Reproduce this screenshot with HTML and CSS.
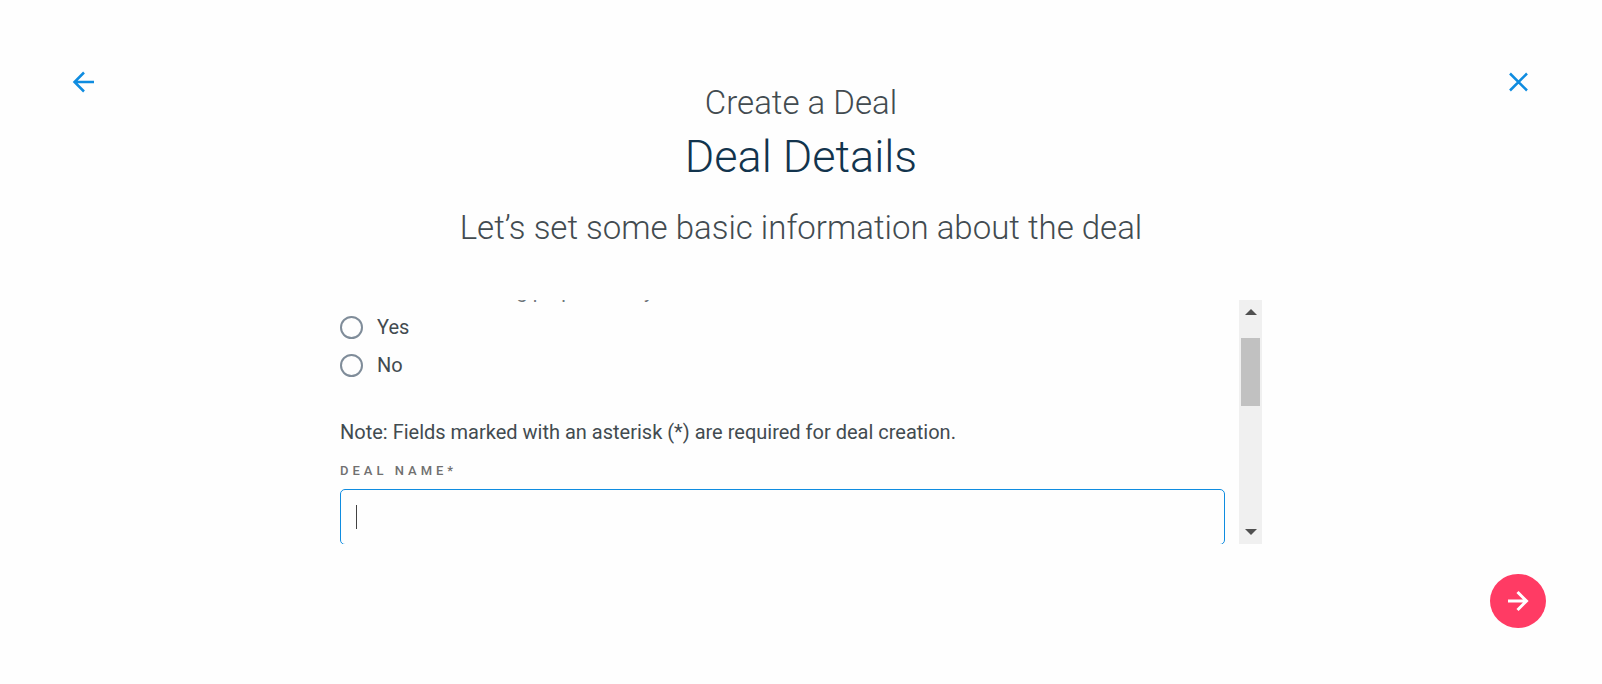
FILE: index.html
```html
<!DOCTYPE html>
<html lang="en">
<head>
<meta charset="utf-8">
<title>Create a Deal</title>
<link rel="stylesheet" href="styles.css">
</head>
<body>
<div class="page">
  <header class="header">
    <button class="icon-button" type="button" aria-label="Back">
      <svg width="24" height="22" viewBox="0 0 24 22"><path d="M23 11H4M13 1.500L3.500 11l9.500 9.500"/></svg>
    </button>
    <div class="titles">
      <p class="flow-name">Create a Deal</p>
      <h1 class="step-name">Deal Details</h1>
      <p class="intro">Let’s set some basic information about the deal</p>
    </div>
    <button class="icon-button" type="button" aria-label="Close">
      <svg width="22" height="22" viewBox="0 0 22 22"><path d="M2 2.500l17 17M19 2.500l-17 17"/></svg>
    </button>
  </header>
  <main class="panel">
    <form class="form">
      <fieldset class="choices">
        <legend class="question">Is the deal now being prepared only?</legend>
        <label class="choice"><input class="radio" type="radio" name="option"><span>Yes</span></label>
        <label class="choice"><input class="radio" type="radio" name="option"><span>No</span></label>
      </fieldset>
      <p class="note">Note: Fields marked with an asterisk (*) are required for deal creation.</p>
      <label class="field-label" for="deal-name">DEAL NAME*</label>
      <div class="field">
        <input class="text-input" id="deal-name" type="text">
        <span class="caret"></span>
      </div>
    </form>
    <div class="scrollbar" aria-hidden="true">
      <svg class="arrow" width="12" height="6" viewBox="0 0 12 6"><path d="M0 6L6 0l6 6z"/></svg>
      <div class="track"><div class="thumb"></div></div>
      <svg class="arrow" width="12" height="6" viewBox="0 0 12 6"><path d="M0 0l6 6 6-6z"/></svg>
    </div>
  </main>
  <footer class="footer">
    <button class="next" type="button" aria-label="Next">
      <svg width="22" height="22" viewBox="0 0 22 22"><path d="M1 11h18M10.500 2l9 9-9 9"/></svg>
    </button>
  </footer>
</div>
</body>
</html>
```
FILE: styles.css
```css
* { box-sizing: border-box; }
body {
  margin: 0;
  background: #fefefe;
  color: #424b50;
  font-family: Roboto, "Liberation Sans", sans-serif;
  font-size: 20px;
}
p, h1 { margin: 0; font-weight: 300; }
button { border: 0; padding: 0; cursor: pointer; }
svg { display: block; fill: none; stroke: currentColor; stroke-width: 3; }
.page { display: flex; flex-direction: column; height: 100vh; padding: 56px; }
.header { display: flex; justify-content: space-between; align-items: flex-start; }
.icon-button {
  display: grid;
  place-items: center;
  width: 54px;
  height: 52px;
  background: none;
  color: #0f8ce0;
}
.icon-button svg { stroke-width: 2.500; }
.titles { padding-top: 25px; text-align: center; }
.flow-name { font-size: 33px; line-height: 44px; }
.step-name { font-size: 45px; line-height: 64px; color: #12344d; }
.intro { margin-top: 17px; font-size: 33px; line-height: 44px; }
.panel {
  display: flex;
  flex: 1;
  gap: 14px;
  width: 100%;
  max-width: 922px;
  min-height: 0;
  margin: 50px auto 30px;
  overflow: hidden;
}
.form { flex: 1; margin-top: -21px; }
.choices { margin: 0; padding: 0; border: 0; }
.question { padding: 0; color: #6f757b; line-height: 24px; margin-bottom: 5px; }
.choice { display: flex; align-items: center; gap: 14px; height: 38px; }
.radio {
  appearance: none;
  width: 23px;
  height: 23px;
  margin: 0;
  border: 2px solid #7f8c99;
  border-radius: 50%;
}
.note { margin-top: 36px; font-weight: 400; line-height: 24px; }
.field-label {
  display: block;
  margin-top: 17px;
  font-size: 13px;
  font-weight: 500;
  line-height: 20px;
  letter-spacing: 4px;
  color: #707070;
}
.field { position: relative; margin-top: 8px; }
.text-input {
  display: block;
  width: 100%;
  height: 56px;
  padding: 0 15px;
  border: 1px solid #0f8ce0;
  border-radius: 5px;
  outline: 0;
  background: transparent;
  color: inherit;
  font: inherit;
  caret-color: transparent;
}
.caret { position: absolute; left: 16px; top: 16px; width: 1px; height: 24px; background: #424242; }
.scrollbar {
  display: flex;
  flex-direction: column;
  align-items: center;
  width: 23px;
  padding: 9px 2px;
  background: #f0f0f0;
}
.arrow { fill: #505050; stroke: none; }
.track { flex: 1; width: 100%; padding: 23px 0; }
.thumb { height: 68px; background: #c1c1c1; }
.footer { display: flex; justify-content: flex-end; }
.next {
  display: grid;
  place-items: center;
  width: 56px;
  height: 54px;
  border-radius: 50%;
  background: #ff3b64;
  color: #fff;
}
```
